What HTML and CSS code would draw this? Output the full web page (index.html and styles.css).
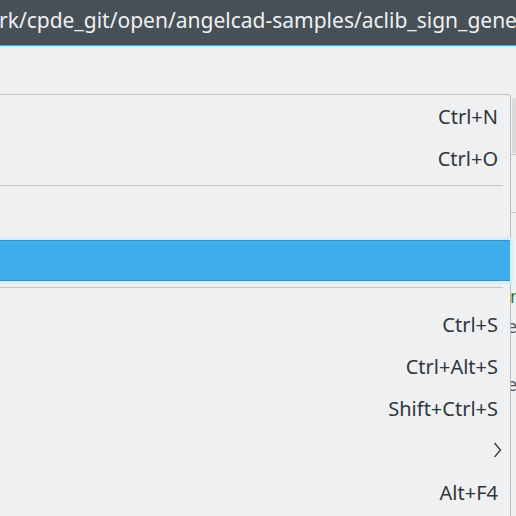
FILE: index.html
```html
<!DOCTYPE html>
<html>
<head>
<meta charset="utf-8">
<link rel="stylesheet" href="styles.css">
</head>
<body>
<div class="titlebar">
  <div class="title">rk/cpde_git/open/angelcad-samples/aclib_sign_gene</div>
</div>
<div class="workspace">
  <div class="side-strip">
    <div class="strip-bar"></div>
    <div class="strip-line l1"></div>
    <div class="strip-line l2"></div>
    <span class="strip-glyph g1">n</span>
    <span class="strip-glyph g2">e</span>
    <span class="strip-glyph g3">e</span>
  </div>
  <div class="menu">
    <div class="item"><span class="label"></span><span class="shortcut">Ctrl+N</span></div>
    <div class="item"><span class="label"></span><span class="shortcut">Ctrl+O</span></div>
    <div class="sep sep-a"></div>
    <div class="item"><span class="label"></span><span class="shortcut"></span></div>
    <div class="item active"><span class="label"></span><span class="shortcut"></span></div>
    <div class="sep sep-b"></div>
    <div class="item"><span class="label"></span><span class="shortcut">Ctrl+S</span></div>
    <div class="item"><span class="label"></span><span class="shortcut">Ctrl+Alt+S</span></div>
    <div class="item"><span class="label"></span><span class="shortcut">Shift+Ctrl+S</span></div>
    <div class="item"><span class="label"></span><span class="shortcut arrow"><svg width="9" height="16" viewBox="0 0 9 16"><polyline points="1.5,1 7.5,8 1.5,15" fill="none" stroke="#31363b" stroke-width="1.3"/></svg></span></div>
    <div class="item"><span class="label"></span><span class="shortcut">Alt+F4</span></div>
  </div>
</div>
</body>
</html>
```

FILE: styles.css
```css
html, body {
  margin: 0;
  padding: 0;
}
body {
  width: 516px;
  height: 516px;
  overflow: hidden;
  background: #eff0f1;
  font-family: "Noto Sans", "Open Sans", sans-serif;
  color: #31363b;
}
.titlebar {
  height: 45px;
  background: #475057;
  border-bottom: 1px solid #3daee9;
  box-shadow: 0 1px 0 #c9ecfa;
  overflow: hidden;
}
.title {
  white-space: nowrap;
  color: #eff0f1;
  font-size: 21px;
  line-height: 45px;
  margin-left: -1px;
  margin-top: -2px;
}
.workspace {
  position: relative;
  height: 470px;
}
.side-strip {
  position: absolute;
  left: 511px;
  top: 0;
  width: 5px;
  height: 470px;
  overflow: hidden;
}
.strip-bar {
  position: absolute;
  left: 1px;
  top: 52px;
  width: 4px;
  height: 55px;
  background: #dadbdc;
}
.strip-line {
  position: absolute;
  left: 0;
  width: 5px;
  height: 1px;
  background: #c3c4c6;
}
.l1 { top: 108px; }
.l2 { top: 166px; }
.strip-glyph {
  position: absolute;
  left: 0;
  font-size: 18px;
  line-height: 20px;
  color: #3a6e3a;
}
.g1 { top: 240px; left: -1px; color: #2e7a2e; }
.g2 { top: 270px; left: -4px; color: #555; }
.g3 { top: 328px; left: -4px; color: #555; }
.menu {
  position: absolute;
  left: -10px;
  top: 48px;
  width: 520px;
  background: #eff0f1;
  border-top: 1px solid #c2c3c5;
  border-right: 1px solid #bcbdbf;
  border-top-right-radius: 3px;
  padding-bottom: 10px;
}
.item {
  height: 42px;
  display: flex;
  align-items: center;
  justify-content: space-between;
  padding: 0 12px 0 10px;
  font-size: 20px;
}
.shortcut {
  display: flex;
  align-items: center;
}
.arrow {
  margin-right: -4px;
}
.sep {
  height: 1px;
  background: #c4c5c7;
  margin-right: 7px;
}
.sep-a {
  margin-top: 6px;
  margin-bottom: 6px;
}
.active {
  height: 39px;
  margin-top: 6px;
  background: #3daee9;
  border-top: 1px solid #3590c4;
  border-bottom: 1px solid #3590c4;
  box-shadow: 0 0 0 3px #d3eefa;
}
.sep-b {
  margin-top: 6px;
  margin-bottom: 15px;
}
```
